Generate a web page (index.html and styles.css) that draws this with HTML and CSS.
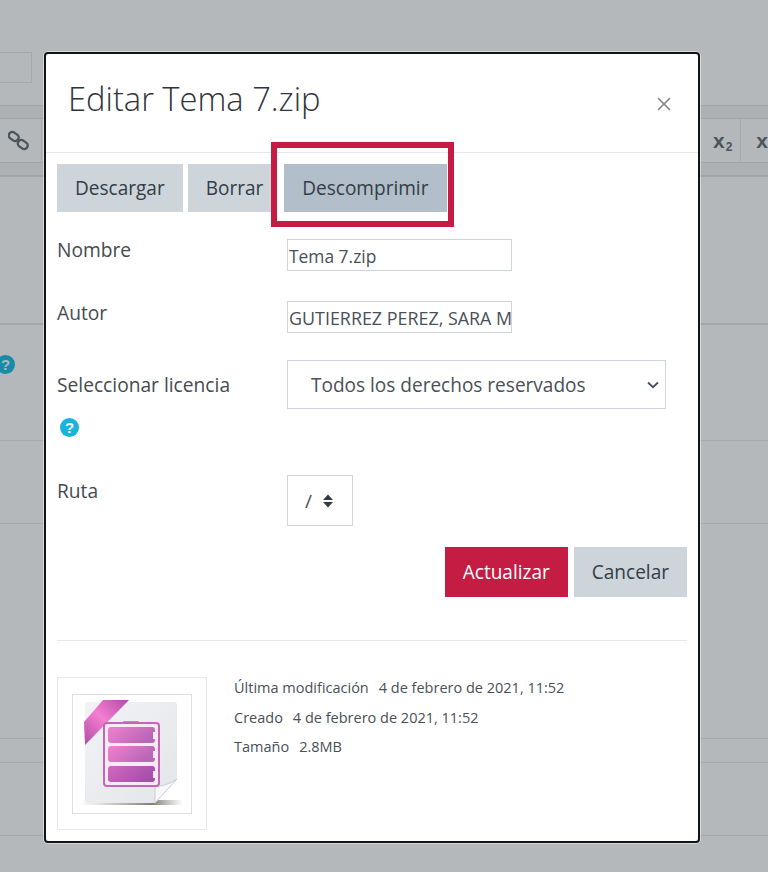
FILE: index.html
```html
<!DOCTYPE html>
<html lang="es">
<head>
<meta charset="utf-8">
<title>Editar Tema 7.zip</title>
<link rel="stylesheet" href="styles.css">
</head>
<body>
<div class="page">
  <div class="bg-input"></div>
  <div class="toolbar">
    <div class="tool-strip"></div>
    <div class="tool-row">
      <div class="tool-left">
        <svg width="21" height="21" viewBox="0 0 21 21"><g fill="none" stroke="#4d555b" stroke-width="2.4"><rect x="0.5" y="3" width="10.5" height="7" rx="3.5" transform="rotate(35 5.75 6.5)"/><rect x="9.5" y="11" width="10.5" height="7" rx="3.5" transform="rotate(35 14.75 14.5)"/></g></svg>
      </div>
      <div class="tool-right">
        <span class="sub-btn">x<sub>2</sub></span>
        <span class="sup-btn">x</span>
      </div>
    </div>
    <div class="tool-strip low"></div>
  </div>
  <div class="bg-help"><span class="help dim">?</span></div>
  <div class="bg-line l1"></div>
  <div class="bg-line l2"></div>
  <div class="bg-line l3"></div>
  <div class="bg-line l4"></div>
  <div class="bg-line l5"></div>
  <div class="bg-line l6"></div>
</div>

<div class="modal">
  <header class="modal-head">
    <h1>Editar Tema 7.zip</h1>
    <svg class="close" width="14" height="14" viewBox="0 0 14 14"><path d="M1 1L13 13M13 1L1 13" stroke="#7d8184" stroke-width="1.5" fill="none"/></svg>
  </header>
  <div class="modal-body">
    <div class="actions">
      <button class="btn">Descargar</button>
      <button class="btn cut">Borrar</button>
      <span class="mark"><button class="btn active">Descomprimir</button></span>
    </div>
    <div class="field f-name">
      <label>Nombre</label>
      <div class="input">Tema 7.zip</div>
    </div>
    <div class="field f-author">
      <label>Autor</label>
      <div class="input wide">GUTIERREZ PEREZ, SARA M</div>
    </div>
    <div class="field f-license">
      <div class="label-stack">
        <label>Seleccionar licencia</label>
        <span class="help">?</span>
      </div>
      <div class="select">
        <span>Todos los derechos reservados</span>
        <svg width="12" height="8" viewBox="0 0 12 8"><path d="M1 1.5L6 6.2L11 1.5" fill="none" stroke="#495057" stroke-width="1.8"/></svg>
      </div>
    </div>
    <div class="field f-path">
      <label>Ruta</label>
      <div class="path"><span>/</span><svg width="10" height="14" viewBox="0 0 10 14"><path d="M5 0.5L10 6H0ZM0 8H10L5 13.5Z" fill="#343a40"/></svg></div>
    </div>
    <div class="submit">
      <button class="btn primary">Actualizar</button>
      <button class="btn">Cancelar</button>
    </div>
    <hr class="rule">
    <div class="info">
      <div class="thumb">
        <div class="thumb-inner">
          <svg class="zip-icon" width="118" height="118" viewBox="0 0 118 118">
            <defs>
              <linearGradient id="page" x1="0" y1="0" x2="1" y2="1"><stop offset="0" stop-color="#f3f3f6"/><stop offset="1" stop-color="#e2e5e9"/></linearGradient>
              <linearGradient id="cell" x1="0" y1="0" x2="1" y2="0.4"><stop offset="0" stop-color="#f280cf"/><stop offset="1" stop-color="#b866b6"/></linearGradient>
              <linearGradient id="cell3" x1="0" y1="0" x2="1" y2="0.4"><stop offset="0" stop-color="#d268c0"/><stop offset="1" stop-color="#a650aa"/></linearGradient>
              <linearGradient id="ribbon" x1="0" y1="1" x2="1" y2="0"><stop offset="0" stop-color="#b04aa6"/><stop offset="0.5" stop-color="#f47ed0"/><stop offset="1" stop-color="#b04aa6"/></linearGradient>
              <linearGradient id="shadow" x1="0" y1="0" x2="1" y2="0"><stop offset="0" stop-color="#8f8f84" stop-opacity="0"/><stop offset="0.7" stop-color="#7f7f74"/><stop offset="1" stop-color="#8f8f84" stop-opacity="0"/></linearGradient>
            </defs>
            <rect x="7" y="105" width="103" height="5" fill="url(#shadow)"/>
            <path d="M12 10Q12 7 15 7H101Q104 7 104 10V84L82 108H15Q12 108 12 105Z" fill="url(#page)"/>
            <path d="M82 108V91Q92 92 104 84Z" fill="#f8f8fa" stroke="#c9ccd2"/>
            <path d="M30 5H56L12 50L11 27Z" fill="url(#ribbon)"/>
            <rect x="50" y="26" width="16" height="5" rx="1" fill="#dd7ac6"/>
            <rect x="31" y="28" width="55" height="63" rx="3" fill="#f8eaf5" stroke="#c763b8" stroke-width="2"/>
            <rect x="35" y="32" width="47" height="16" rx="3" fill="url(#cell)"/>
            <rect x="35" y="51" width="47" height="16" rx="3" fill="url(#cell)"/>
            <rect x="35" y="71" width="47" height="16" rx="3" fill="url(#cell3)"/>
            <path d="M81 37V44M81 56V63M81 76V83" stroke="#f8eaf5" stroke-width="2"/>
          </svg>
        </div>
      </div>
      <dl class="meta">
        <div><dt>Última modificación</dt><dd>4 de febrero de 2021, 11:52</dd></div>
        <div><dt>Creado</dt><dd>4 de febrero de 2021, 11:52</dd></div>
        <div><dt>Tamaño</dt><dd>2.8MB</dd></div>
      </dl>
    </div>
  </div>
</div>
</body>
</html>
```
FILE: styles.css
```css
* { box-sizing: border-box; }
html, body { margin: 0; padding: 0; }
body { width: 768px; height: 872px; overflow: hidden; background: #b4b8bb; font-family: "Open Sans", "Noto Sans", sans-serif; color: #373d42; position: relative; }
.page { height: 872px; display: flex; flex-direction: column; padding-top: 52px; }
.bg-input { width: 32px; height: 31px; border: 1px solid #a5a9ac; border-left: 0; }
.toolbar { margin-top: 22px; height: 72px; display: flex; flex-direction: column; }
.tool-strip { height: 14px; background: #adb1b4; border-top: 1px solid #a1a5a8; border-bottom: 1px solid #a1a5a8; }
.tool-strip.low { height: 15px; border-bottom-width: 2px; }
.tool-row { flex: 1; display: flex; justify-content: space-between; }
.tool-left { width: 42px; display: flex; align-items: center; border-right: 1px solid #a5a9ac; padding-left: 8px; }
.tool-right { width: 69px; display: flex; align-items: center; font-family: "Liberation Sans", sans-serif; font-weight: 700; font-size: 21px; color: #4d555b; }
.sub-btn { width: 53px; height: 100%; padding-left: 14px; display: flex; align-items: center; border-right: 1px solid #a5a9ac; }
.sub-btn sub { font-size: 12px; line-height: 1; align-self: center; margin-top: 12px; margin-left: 1px; }
.sup-btn { flex: none; margin-left: 15px; line-height: 1; }
.bg-help { height: 146px; }
.bg-line { height: 1px; background: #a7abae; flex: none; }
.l1 { height: 2px; background: #a3a7aa; }
.l2 { margin-top: 115px; }
.l3 { margin-top: 82px; }
.l4 { margin-top: 214px; }
.l5 { margin-top: 23px; }
.l6 { margin-top: 72px; }

.help { display: inline-flex; align-items: center; justify-content: center; width: 19px; height: 19px; border-radius: 50%; background: #17b5dc; color: #fff; font-family: "Liberation Sans", sans-serif; font-weight: 700; font-size: 15px; line-height: 1; }
.help.dim { background: #178ca8; color: #b4b8bb; position: absolute; left: -4px; top: 355px; }

.modal { position: absolute; left: 44px; top: 52px; width: 656px; height: 791px; background: #fff; border: 2px solid #141414; border-radius: 4px; box-shadow: 0 0 0 1px rgba(255,255,255,.45); }
.modal-head { height: 99px; border-bottom: 1px solid #e6e8ea; display: flex; justify-content: space-between; padding: 21px 27px 0 22px; }
.modal-head h1 { margin: 0; font-size: 32.7px; font-weight: 300; line-height: 48px; color: #2f353a; }
.close { margin-top: 22px; }
.modal-body { padding: 11px 11px 0; }
.actions { display: flex; gap: 5px; height: 48px; align-items: stretch; }
.btn { font: inherit; font-size: 19.05px; line-height: 26px; height: 48px; padding: 0 18px; border: 0; background: #cdd4da; color: #333e47; border-radius: 0; }
.btn.cut { padding: 0 9px 0 18px; width: 83px; text-align: left; white-space: nowrap; }
.btn.active { background: #b2bec9; padding: 0 18.5px; }
.mark { position: relative; display: flex; margin-left: 8px; }
.mark::after { content: ""; position: absolute; left: -13px; right: -7px; top: -22px; bottom: -15px; border: 6px solid #c41c43; pointer-events: none; }
.field { display: flex; font-size: 19.2px; }
.field label { display: block; width: 230px; line-height: 26px; flex: none; color: #454b50; }
.f-name { margin-top: 27px; }
.f-author { margin-top: 30px; }
.f-license { margin-top: 27px; }
.f-path { margin-top: 38px; }
.f-name label { margin-top: -2px; }
.f-author label { margin-top: -1px; }
.input { width: 225px; height: 32px; border: 1px solid #ced4da; font-size: 17.4px; line-height: 32px; padding-left: 1px; color: #495057; overflow: hidden; white-space: nowrap; }
.input.wide { font-size: 17.9px; }
.label-stack { width: 230px; flex: none; padding-top: 12px; display: flex; flex-direction: column; align-items: flex-start; }
.label-stack .help { margin-top: 20px; margin-left: 3px; }
.select { width: 379px; height: 49px; border: 1px solid #ced4da; padding: 0 6px 0 23px; display: flex; align-items: center; justify-content: space-between; color: #495057; font-size: 19.05px; }
.path { width: 66px; height: 51px; border: 1px solid #ced4da; display: flex; align-items: center; gap: 11px; padding-left: 17px; color: #495057; font-size: 19px; }
.f-path label { margin-top: 3px; }
.submit { display: flex; justify-content: flex-end; gap: 6px; margin-top: 21px; }
.submit .btn { height: 50px; }
.btn.primary { background: #c41c43; color: #fff; }
.rule { border: 0; border-top: 1px solid #e6e8ea; margin: 43px 0 0; }
.info { display: flex; margin-top: 36px; }
.thumb { width: 150px; height: 153px; border: 1px solid #e6e8ea; display: flex; align-items: center; justify-content: center; }
.thumb-inner { width: 120px; height: 120px; border: 1px solid #dcdfe2; display: flex; align-items: center; justify-content: center; }
.zip-icon { filter: blur(0.5px); }
.meta { margin: -1px 0 0 27px; font-size: 14.5px; color: #495057; }
.meta div { display: flex; gap: 10px; height: 29.5px; line-height: 24px; }
.meta dt, .meta dd { margin: 0; }
```
